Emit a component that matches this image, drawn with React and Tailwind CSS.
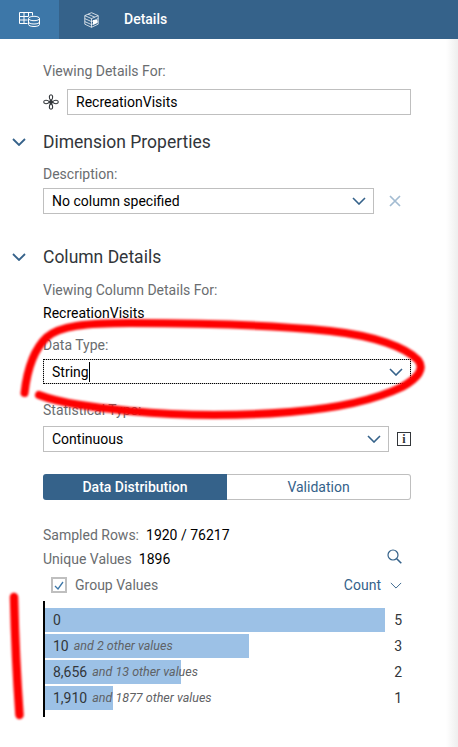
import React from "react";

const Chevron = ({ className = "", strokeWidth = 1.6 }) => (
  <svg viewBox="0 0 14 8" className={className} fill="none" stroke="currentColor" strokeWidth={strokeWidth}>
    <path d="M1 1 L7 7 L13 1" />
  </svg>
);

const Label = ({ children, className = "" }) => (
  <div className={`text-[14px] leading-[20px] text-[#6a6d70] ${className}`}>{children}</div>
);

const Select = ({ value, className = "" }) => (
  <div className={`flex h-[26px] items-center justify-between border border-[#bfbfbf] bg-white pl-[8px] text-[14px] text-black ${className}`}>
    <span>{value}</span>
    <Chevron className="mr-[7px] h-[8px] w-[14px] text-[#35628a]" />
  </div>
);

const Section = ({ title, className = "" }) => (
  <div className={`flex h-[24px] items-center ${className}`}>
    <Chevron className="ml-[12px] h-[8px] w-[14px] text-[#35628a]" strokeWidth={1.8} />
    <span className="ml-[17px] text-[17.500px] text-[#32363a]">{title}</span>
  </div>
);

const bars = [
  { v: "0", other: "", w: "w-[340px]", n: 5 },
  { v: "10", other: "and 2 other values", w: "w-[204px]", n: 3 },
  { v: "8,656", other: "and 13 other values", w: "w-[136px]", n: 2 },
  { v: "1,910", other: "and 1877 other values", w: "w-[68px]", n: 1 },
];

export default function App() {
  return (
    <div className="relative h-[747px] w-[458px] overflow-hidden bg-white font-['Roboto',sans-serif]">
      <div className="absolute inset-y-0 right-0 w-[12px] bg-gradient-to-r from-white to-[#eeeeee]" />

      <div className="relative">
        <header className="flex h-[39px] items-center bg-[#35628a] text-white">
          <div className="flex h-full w-[59px] items-center justify-center bg-[#3d77a8]">
            <svg viewBox="0 0 21 15" className="h-[15px] w-[21px]" fill="none" stroke="white" strokeWidth="1">
              <path d="M.5.5h13v3M.5.5v11h8M.5 4.500h9M.5 8h8M5 .5v11M9.500.5v4" />
              <ellipse cx="15" cy="6.500" rx="5.500" ry="2.200" />
              <path d="M9.500 6.500v6c0 1.200 2.500 2 5.500 2s5.500-.8 5.500-2v-6M9.500 10c0 1.200 2.500 2 5.500 2s5.500-.8 5.500-2" />
            </svg>
          </div>
          <svg viewBox="0 0 15 16" className="ml-[25px] h-[16px] w-[15px]" fill="none" stroke="white" strokeWidth="1">
            <path d="M7.500.7 14.200 3.600v8.600L7.500 15.300.8 12.200V3.600Z" strokeOpacity=".75" />
            <path d="M.8 3.600 7.500 6.600l6.700-3M7.500 6.600v8.700M4 2.200l6.800 3M.8 6.600l6.700 3 6.700-3M.8 9.600l6.700 3 6.700-3" strokeOpacity=".75" />
            <path d="M9 8h4.400v3L9 13Z" fill="white" stroke="none" />
          </svg>
          <span className="ml-[25px] text-[14px] font-medium">Details</span>
        </header>

        <main className="pl-[43px] pr-[47px]">
          <Label className="mt-[22px]">Viewing Details For:</Label>
          <div className="mt-[8px] flex items-center">
            <svg viewBox="0 0 16 16" className="h-[16px] w-[16px] shrink-0" fill="none" stroke="#32363a" strokeWidth="1.100">
              <circle cx="8" cy="8" r="1.500" fill="#32363a" />
              <path d="M8 6.500C5.500 4.500 6 .7 8 .7s2.500 3.800 0 5.800ZM8 9.500c-2.500 2-2 5.800 0 5.800s2.500-3.800 0-5.800ZM6.500 8C4.500 5.500.7 6 .7 8s3.800 2.500 5.800 0ZM9.500 8c2-2.500 5.800-2 5.800 0s-3.800 2.500-5.800 0Z" />
            </svg>
            <div className="ml-[8px] flex h-[26px] flex-1 items-center border border-[#bfbfbf] pl-[8px] text-[14px] text-black">
              RecreationVisits
            </div>
          </div>
        </main>

        <Section title="Dimension Properties" className="mt-[15px]" />

        <div className="pl-[43px] pr-[47px]">
          <Label className="mt-[10px]">Description:</Label>
          <div className="mt-[4px] flex items-center">
            <Select value="No column specified" className="w-[331px]" />
            <svg viewBox="0 0 12 12" className="ml-[15px] h-[12px] w-[12px]" fill="none" stroke="#a3bcd2" strokeWidth="1.700">
              <path d="M1 1l10 10M11 1 1 11" />
            </svg>
          </div>
        </div>

        <Section title="Column Details" className="mt-[31px]" />

        <div className="pl-[43px] pr-[47px]">
          <Label className="mt-[11px]">Viewing Column Details For:</Label>
          <div className="mt-[3px] text-[14px] leading-[20px] text-black">RecreationVisits</div>
          <Label className="mt-[12px]">Data Type:</Label>
          <div className="mt-[4px] flex h-[25px] items-center justify-between border border-[#bfbfbf] bg-white pl-[8px] text-[14px] text-black outline-1 -outline-offset-1 outline-dotted outline-black">
            <span className="border-r border-black leading-[20px]">String</span>
            <Chevron className="mr-[7px] h-[8px] w-[14px] text-[#35628a]" />
          </div>
          <Label className="mt-[16px]">Statistical Type:</Label>
          <div className="mt-[6px] flex items-center">
            <Select value="Continuous" className="w-[346px]" />
            <div className="ml-[8px] flex h-[14px] w-[14px] items-center justify-center border border-[#32363a] font-['Liberation_Serif',serif] text-[12px] font-bold leading-none text-[#32363a]">
              i
            </div>
          </div>

          <div className="mt-[22px] flex h-[26px] text-[14px]">
            <div className="flex w-[184px] items-center justify-center rounded-l-[3px] bg-[#35628a] font-medium text-white">Data Distribution</div>
            <div className="flex flex-1 items-center justify-center rounded-r-[3px] border border-l-0 border-[#bfbfbf] text-[#35628a]">Validation</div>
          </div>

          <div className="mt-[25px] flex text-[14px] leading-[20px]">
            <span className="text-[#6a6d70]">Sampled Rows:</span>
            <span className="ml-[7px] text-black">1920 / 76217</span>
          </div>
          <div className="mt-[4px] flex h-[20px] items-center text-[14px] leading-[20px]">
            <span className="text-[#6a6d70]">Unique Values</span>
            <span className="ml-[7px] text-black">1896</span>
            <svg viewBox="0 0 15 15" className="ml-auto mr-[9px] -mt-[6px] h-[15px] w-[15px]" fill="none" stroke="#35628a" strokeWidth="1.200">
              <circle cx="6" cy="6" r="5" />
              <path d="M9.700 9.700 14.300 14.300" strokeWidth="1.600" />
            </svg>
          </div>
          <div className="mt-[6px] flex h-[20px] items-center pl-[8px] text-[14px] leading-[20px]">
            <div className="flex h-[16px] w-[16px] items-center justify-center border-2 border-[#bfbfbf]">
              <svg viewBox="0 0 10 9" className="h-[9px] w-[10px]" fill="none" stroke="#3d77a8" strokeWidth="1.300">
                <path d="M1 5l3 3 5-7" />
              </svg>
            </div>
            <span className="ml-[8px] text-[#6a6d70]">Group Values</span>
            <span className="ml-auto text-[#35628a]">Count</span>
            <Chevron className="ml-[9px] mr-[9px] h-[7px] w-[12px] text-[#35628a]" strokeWidth={1.100} />
          </div>

          <div className="mt-[6px] flex flex-col gap-[2px] border-l-2 border-black py-[7px]">
            {bars.map((b) => (
              <div key={b.n} className="relative flex h-[24px] items-center">
                <div className={`absolute inset-y-0 left-0 bg-[#9cc1e6] ${b.w}`} />
                <span className="relative ml-[8px] text-[14px] text-[#32363a]">{b.v}</span>
                {b.other && (
                  <span className="relative ml-[5px] text-[12.500px] italic text-[#5f6265]">{b.other}</span>
                )}
                <span className="relative ml-auto mr-[9px] text-[14px] text-[#32363a]">{b.n}</span>
              </div>
            ))}
          </div>
        </div>
      </div>

      <svg viewBox="0 0 458 747" className="pointer-events-none absolute inset-0 h-[747px] w-[458px]" fill="none" stroke="#fe0000" strokeLinecap="round" style={{ filter: "blur(0.8px)" }}>
        <path strokeWidth="8" d="M24.500 393C27 371 33 350 47 337C60 326 85 323 130 323C190 323 270 325 330 331C375 336 405 347 418 360C425 369 418 378 402 387C375 400 340 408 290 412C240 416 180 416 130 411C90 407 60 403 39 395" />
        <path strokeWidth="8.500" d="M14 597C15 640 17 680 19.500 715" />
      </svg>
    </div>
  );
}
